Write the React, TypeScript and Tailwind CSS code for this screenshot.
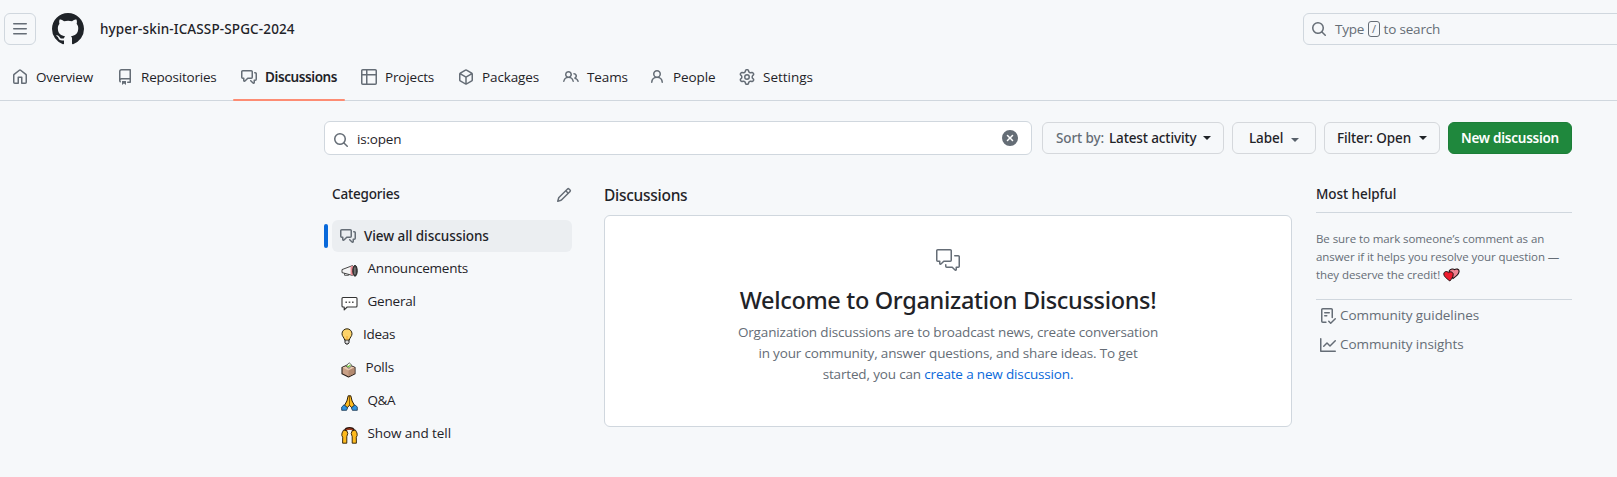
import type { ReactNode } from "react";

const paths = {
  bars: "M1 2.75A.75.75 0 0 1 1.75 2h12.5a.75.75 0 0 1 0 1.5H1.75A.75.75 0 0 1 1 2.75Zm0 5A.75.75 0 0 1 1.75 7h12.5a.75.75 0 0 1 0 1.5H1.75A.75.75 0 0 1 1 7.75ZM1.75 12h12.5a.75.75 0 0 1 0 1.5H1.75a.75.75 0 0 1 0-1.5Z",
  mark: "M8 0c4.42 0 8 3.58 8 8a8.013 8.013 0 0 1-5.45 7.59c-.4.08-.55-.17-.55-.38 0-.27.01-1.13.01-2.2 0-.75-.25-1.23-.54-1.48 1.78-.2 3.65-.88 3.65-3.95 0-.88-.31-1.59-.82-2.15.08-.2.36-1.02-.08-2.12 0 0-.67-.22-2.2.82-.64-.18-1.32-.27-2-.27-.68 0-1.36.09-2 .27-1.53-1.03-2.2-.82-2.2-.82-.44 1.1-.16 1.92-.08 2.12-.51.56-.82 1.28-.82 2.15 0 3.06 1.86 3.75 3.64 3.95-.23.2-.44.55-.51 1.07-.46.21-1.61.55-2.33-.66-.15-.24-.6-.83-1.23-.82-.67.01-.27.38.01.53.34.19.73.9.82 1.13.16.45.68 1.31 2.69.94 0 .67.01 1.3.01 1.49 0 .21-.15.45-.55.38A7.995 7.995 0 0 1 0 8c0-4.42 3.58-8 8-8Z",
  search: "M10.68 11.74a6 6 0 0 1-7.922-8.982 6 6 0 0 1 8.982 7.922l3.04 3.04a.749.749 0 0 1-.326 1.275.749.749 0 0 1-.734-.215ZM11.5 7a4.499 4.499 0 1 0-8.997 0A4.499 4.499 0 0 0 11.5 7Z",
  home: "M6.906.664a1.749 1.749 0 0 1 2.187 0l5.25 4.2c.415.332.657.835.657 1.367v7.019A1.75 1.75 0 0 1 13.25 15h-3.5a.75.75 0 0 1-.75-.75V9H7v5.25a.75.75 0 0 1-.75.75h-3.5A1.75 1.75 0 0 1 1 13.25V6.23c0-.531.242-1.034.657-1.366l5.25-4.2Zm1.25 1.171a.25.25 0 0 0-.312 0l-5.25 4.2a.25.25 0 0 0-.094.196v7.019c0 .138.112.25.25.25H5.5V8.25a.75.75 0 0 1 .75-.75h3.5a.75.75 0 0 1 .75.75v5.25h2.75a.25.25 0 0 0 .25-.25V6.23a.25.25 0 0 0-.094-.195Z",
  repo: "M2 2.5A2.5 2.5 0 0 1 4.5 0h8.75a.75.75 0 0 1 .75.75v12.5a.75.75 0 0 1-.75.75h-2.5a.75.75 0 0 1 0-1.5h1.75v-2h-8a1 1 0 0 0-.714 1.7.75.75 0 1 1-1.072 1.05A2.495 2.495 0 0 1 2 11.5Zm10.5-1h-8a1 1 0 0 0-1 1v6.708A2.486 2.486 0 0 1 4.5 9h8ZM5 12.25a.25.25 0 0 1 .25-.25h3.5a.25.25 0 0 1 .25.25v3.25a.25.25 0 0 1-.4.2l-1.45-1.087a.249.249 0 0 0-.3 0L5.4 15.7a.25.25 0 0 1-.4-.2Z",
  discuss: "M1.75 1h8.5c.966 0 1.75.784 1.75 1.75v5.5A1.75 1.75 0 0 1 10.25 10H7.061l-2.574 2.573A1.458 1.458 0 0 1 2 11.543V10h-.25A1.75 1.75 0 0 1 0 8.25v-5.5C0 1.784.784 1 1.75 1ZM1.5 2.75v5.5c0 .138.112.25.25.25h1a.75.75 0 0 1 .75.75v2.19l2.72-2.72a.749.749 0 0 1 .53-.22h3.5a.25.25 0 0 0 .25-.25v-5.5a.25.25 0 0 0-.25-.25h-8.5a.25.25 0 0 0-.25.25Zm13 2a.25.25 0 0 0-.25-.25h-.5a.75.75 0 0 1 0-1.5h.5c.966 0 1.75.784 1.75 1.75v5.5A1.75 1.75 0 0 1 14.25 12H14v1.543a1.458 1.458 0 0 1-2.487 1.03L9.22 12.28a.749.749 0 0 1 .326-1.275.749.749 0 0 1 .734.215l2.22 2.22v-2.19a.75.75 0 0 1 .75-.75h1a.25.25 0 0 0 .25-.25Z",
  table: "M0 1.75C0 .784.784 0 1.75 0h12.5C15.216 0 16 .784 16 1.75v12.5A1.75 1.75 0 0 1 14.25 16H1.75A1.75 1.75 0 0 1 0 14.25ZM6.5 6.5v8h7.75a.25.25 0 0 0 .25-.25V6.5Zm8-1.5V1.75a.25.25 0 0 0-.25-.25H6.5V5Zm-13 1.5v7.75c0 .138.112.25.25.25H5v-8ZM5 5V1.5H1.75a.25.25 0 0 0-.25.25V5Z",
  pkg: "m8.878.392 5.25 3.045c.54.314.872.89.872 1.514v6.098a1.75 1.75 0 0 1-.872 1.514l-5.25 3.045a1.75 1.75 0 0 1-1.756 0l-5.25-3.045A1.75 1.75 0 0 1 1 11.049V4.951c0-.624.332-1.201.872-1.514L7.122.392a1.75 1.75 0 0 1 1.756 0ZM7.875 1.69l-4.63 2.685L8 7.133l4.755-2.758-4.63-2.685a.248.248 0 0 0-.25 0ZM2.5 5.677v5.372c0 .09.047.171.125.216l4.625 2.683V8.432Zm6.25 8.271 4.625-2.683a.25.25 0 0 0 .125-.216V5.677L8.75 8.432Z",
  people: "M2 5.5a3.5 3.5 0 1 1 5.898 2.549 5.508 5.508 0 0 1 3.034 4.084.75.75 0 1 1-1.482.235 4 4 0 0 0-7.9 0 .75.75 0 0 1-1.482-.236A5.507 5.507 0 0 1 3.102 8.05 3.493 3.493 0 0 1 2 5.5ZM11 4a3.001 3.001 0 0 1 2.22 5.018 5.01 5.01 0 0 1 2.56 3.012.749.749 0 0 1-.885.954.752.752 0 0 1-.549-.514 3.507 3.507 0 0 0-2.522-2.372.75.75 0 0 1-.574-.73v-.352a.75.75 0 0 1 .416-.672A1.5 1.5 0 0 0 11 5.5.75.75 0 0 1 11 4Zm-5.5-.5a2 2 0 1 0-.001 3.999A2 2 0 0 0 5.5 3.5Z",
  person: "M10.561 8.073a6.005 6.005 0 0 1 3.432 5.142.75.75 0 1 1-1.498.07 4.5 4.5 0 0 0-8.99 0 .75.75 0 0 1-1.498-.07 6.004 6.004 0 0 1 3.431-5.142 3.999 3.999 0 1 1 5.123 0ZM10.5 5a2.5 2.5 0 1 0-5 0 2.5 2.5 0 0 0 5 0Z",
  gear: "M8 0a8.2 8.2 0 0 1 .701.031C9.444.095 9.99.645 10.16 1.29l.288 1.107c.018.066.079.158.212.224.231.114.454.243.668.386.123.082.233.09.299.071l1.103-.303c.644-.176 1.392.021 1.82.63.27.385.506.792.704 1.218.315.675.111 1.422-.364 1.891l-.814.806c-.049.048-.098.147-.088.294.016.257.016.515 0 .772-.01.147.038.246.088.294l.814.806c.475.469.679 1.216.364 1.891a7.977 7.977 0 0 1-.704 1.217c-.428.61-1.176.807-1.82.63l-1.102-.302c-.067-.019-.177-.011-.3.071a5.909 5.909 0 0 1-.668.386c-.133.066-.194.158-.211.224l-.29 1.106c-.168.646-.715 1.196-1.458 1.26a8.006 8.006 0 0 1-1.402 0c-.743-.064-1.289-.614-1.458-1.26l-.289-1.106c-.018-.066-.079-.158-.212-.224a5.738 5.738 0 0 1-.668-.386c-.123-.082-.233-.09-.299-.071l-1.103.303c-.644.176-1.392-.021-1.82-.63a8.12 8.12 0 0 1-.704-1.218c-.315-.675-.111-1.422.363-1.891l.815-.806c.05-.048.098-.147.088-.294a6.214 6.214 0 0 1 0-.772c.01-.147-.038-.246-.088-.294l-.815-.806C.635 6.045.431 5.298.746 4.623a7.92 7.92 0 0 1 .704-1.217c.428-.61 1.176-.807 1.82-.63l1.102.302c.067.019.177.011.3-.071.214-.143.437-.272.668-.386.133-.066.194-.158.211-.224l.29-1.106C6.009.645 6.556.095 7.299.03 7.53.01 7.764 0 8 0Zm-.571 1.525c-.036.003-.108.036-.137.146l-.289 1.105c-.147.561-.549.967-.998 1.189-.173.086-.34.183-.5.29-.417.278-.97.423-1.529.27l-1.103-.303c-.109-.03-.175.016-.195.045-.22.312-.412.644-.573.99-.014.031-.021.11.059.19l.815.806c.411.406.562.957.53 1.456a4.709 4.709 0 0 0 0 .582c.032.499-.119 1.05-.53 1.456l-.815.806c-.081.08-.073.159-.059.19.162.346.353.677.573.989.02.03.085.076.195.046l1.102-.303c.56-.153 1.113-.008 1.53.27.161.107.328.204.501.29.447.222.85.629.997 1.189l.289 1.105c.029.109.101.143.137.146a6.6 6.6 0 0 0 1.142 0c.036-.003.108-.036.137-.146l.289-1.105c.147-.561.549-.967.998-1.189.173-.086.34-.183.5-.29.417-.278.97-.423 1.529-.27l1.103.303c.109.029.175-.016.195-.045.22-.313.411-.644.573-.99.014-.031.021-.11-.059-.19l-.815-.806c-.411-.406-.562-.957-.53-1.456a4.709 4.709 0 0 0 0-.582c-.032-.499.119-1.05.53-1.456l.815-.806c.081-.08.073-.159.059-.19a6.464 6.464 0 0 0-.573-.989c-.02-.03-.085-.076-.195-.046l-1.102.303c-.56.153-1.113.008-1.53-.27a4.44 4.44 0 0 0-.501-.29c-.447-.222-.85-.629-.997-1.189l-.289-1.105c-.029-.11-.101-.143-.137-.146a6.6 6.6 0 0 0-1.142 0ZM11 8a3 3 0 1 1-6 0 3 3 0 0 1 6 0ZM9.5 8a1.5 1.5 0 1 0-3.001.001A1.5 1.5 0 0 0 9.5 8Z",
  pencil: "M11.013 1.427a1.75 1.75 0 0 1 2.474 0l1.086 1.086a1.75 1.75 0 0 1 0 2.474l-8.61 8.61c-.21.21-.47.364-.756.445l-3.251.93a.75.75 0 0 1-.927-.928l.929-3.25c.081-.286.235-.547.445-.758l8.61-8.61Zm.176 4.823L9.75 4.81l-6.286 6.287a.253.253 0 0 0-.064.108l-.558 1.953 1.953-.558a.253.253 0 0 0 .108-.064Zm1.238-3.763a.25.25 0 0 0-.354 0L10.811 3.75l1.439 1.44 1.263-1.263a.25.25 0 0 0 0-.354Z",
  clear: "M2.343 13.657A8 8 0 1 1 13.658 2.343 8 8 0 0 1 2.343 13.657ZM6.03 4.97a.751.751 0 0 0-1.042.018.751.751 0 0 0-.018 1.042L6.94 8 4.97 9.97a.749.749 0 0 0 .326 1.275.749.749 0 0 0 .734-.215L8 9.06l1.97 1.97a.749.749 0 0 0 1.275-.326.749.749 0 0 0-.215-.734L9.06 8l1.97-1.97a.749.749 0 0 0-.326-1.275.749.749 0 0 0-.734.215L8 6.94Z",
  graph: "M1.5 1.75V13.5h13.75a.75.75 0 0 1 0 1.5H.75a.75.75 0 0 1-.75-.75V1.75a.75.75 0 0 1 1.5 0Zm14.28 2.53-5.25 5.25a.75.75 0 0 1-1.06 0L7 7.06 4.28 9.78a.751.751 0 0 1-1.042-.018.751.751 0 0 1-.018-1.042l3.25-3.25a.75.75 0 0 1 1.06 0L10 7.94l4.72-4.72a.751.751 0 0 1 1.042.018.751.751 0 0 1 .018 1.042Z",
  checklist: "M2.5 1.75v11.5c0 .138.112.25.25.25h3.17a.75.75 0 0 1 0 1.5H2.75A1.75 1.75 0 0 1 1 13.25V1.75C1 .784 1.784 0 2.75 0h8.5C12.216 0 13 .784 13 1.75v7.736a.75.75 0 0 1-1.5 0V1.75a.25.25 0 0 0-.25-.25h-8.5a.25.25 0 0 0-.25.25Zm13.274 9.537v-.001l-4.557 4.45a.75.75 0 0 1-1.055-.008l-1.943-1.95a.75.75 0 0 1 1.062-1.058l1.419 1.425 4.026-3.932a.75.75 0 1 1 1.048 1.074ZM4.75 4h4.5a.75.75 0 0 1 0 1.5h-4.5a.75.75 0 0 1 0-1.5ZM4 7.75A.75.75 0 0 1 4.75 7h2a.75.75 0 0 1 0 1.5h-2A.75.75 0 0 1 4 7.75Z",
};

function Icon({ name, className = "size-4 text-[#656d76]" }: { name: keyof typeof paths; className?: string }) {
  return (
    <svg viewBox="0 0 16 16" fill="currentColor" className={`shrink-0 ${className}`}>
      <path d={paths[name]} />
    </svg>
  );
}

const MED = "font-['Noto_Sans',sans-serif] font-medium";

const tabs: { icon: keyof typeof paths; label: string; text: string; active?: boolean }[] = [
  { icon: "home", label: "Overview", text: "w-[57px] tracking-[-0.2px]" },
  { icon: "repo", label: "Repositories", text: "w-[76px] tracking-[-0.2px]" },
  { icon: "discuss", label: "Discussions", text: "w-[72px] tracking-[-0.4px] font-['Noto_Sans',sans-serif] font-semibold", active: true },
  { icon: "table", label: "Projects", text: "w-[49px] tracking-[-0.17px]" },
  { icon: "pkg", label: "Packages", text: "w-[57px] tracking-[-0.12px]" },
  { icon: "people", label: "Teams", text: "w-[38px] tracking-[-0.1px]" },
  { icon: "person", label: "People", text: "w-[42px] tracking-[-0.1px]" },
  { icon: "gear", label: "Settings", text: "w-[50px]" },
];

function Caret({ className }: { className: string }) {
  return (
    <svg viewBox="0 0 8 4" fill="currentColor" className={`h-1 w-2 shrink-0 ${className}`}>
      <path d="M0 0h8L4 4z" />
    </svg>
  );
}

function Button({ className, children }: { className: string; children: ReactNode }) {
  return (
    <button className={`flex h-8 items-center rounded-md border border-[#d5d8dc] bg-[#f6f8fa] whitespace-nowrap ${MED} ${className}`}>
      {children}
    </button>
  );
}

const Megaphone = () => (
  <svg viewBox="0 0 17 14" className="h-3.5 w-[17px]">
    <path d="M3.600 9v2.300h4V10" fill="#fff" stroke="#444" strokeWidth=".9" />
    <path d="M1 5.600 11.500 1.600v9.800L1 8.600z" fill="#f4f4f4" stroke="#333" strokeWidth=".9" strokeLinejoin="round" />
    <path d="M9.600 2.600 12 1.800v9.600l-2.400-.8z" fill="#e98a92" />
    <ellipse cx="14" cy="6.800" rx="2.200" ry="5.400" fill="#4a4a4a" stroke="#1a1a1a" />
    <path d="M13.900 3.600v6.400" stroke="#8e8e8e" />
  </svg>
);
const Speech = () => (
  <svg viewBox="0 0 17 15" className="h-[15px] w-[17px]">
    <path d="M2 1.500h13q1 0 1 1v7.500q0 1-1 1H6.200L3.200 13.900V11H2q-1 0-1-1V2.500q0-1 1-1z" fill="#fff" stroke="#333" strokeWidth="1.100" strokeLinejoin="round" />
    <path d="M4.400 6.200h1.600M7.700 6.200h1.600M11 6.200h1.600" stroke="#555" strokeWidth="1.500" />
  </svg>
);
const Bulb = () => (
  <svg viewBox="0 0 12 17" className="h-[17px] w-3">
    <path d="M4 11h4v3.6L7 16H5l-1-1.4z" fill="#d8d8d8" stroke="#1a1a1a" />
    <path d="M6 .8a5 5 0 0 1 5 5C11 8.300 9 9.200 8.300 12H3.700C3 9.200 1 8.300 1 5.800a5 5 0 0 1 5-5z" fill="#fcd36a" stroke="#2b2412" strokeWidth="1" />
    <path d="M6 8v4" stroke="#f4a52a" />
  </svg>
);
const Ballot = () => (
  <svg viewBox="0 0 15 16" className="h-4 w-[15px]">
    <path d="M1 5.400 7.500 2.600 14 5.400v6.400L7.500 15 1 11.800z" fill="#c9a086" stroke="#2a211b" strokeWidth="1.1" strokeLinejoin="round" />
    <path d="M1.500 5.600 7.500 3.200l6 2.400-6 2.800z" fill="#e8c8ad" />
    <path d="M7.500 8.400v6l6-2.900V5.600z" fill="#b38a70" />
    <path d="m4.800 4 3.400-3.200L11 3.400 8 6.300z" fill="#f5fbef" stroke="#333" strokeWidth=".7" />
    <path d="m6.200 3.800 1.300 1 2-2" stroke="#6cc030" strokeWidth="1.200" fill="none" />
  </svg>
);
const Hands = () => (
  <svg viewBox="0 0 17 16" className="h-4 w-[17px]">
    <path d="M7.200.8h2.600l1.300 5.200 2.300 4.200-2.600 2.600-2.300-2.600-2.300 2.600L3.600 10.200l2.300-4.200z" fill="#fdbb1f" stroke="#2a1c05" strokeWidth="1" strokeLinejoin="round" />
    <path d="M8.500 1v9.500" stroke="#7a5208" strokeWidth=".9" />
    <path d="m3 9.800 3.600 3-1 2.500H.7v-3.200zM14 9.800l-3.600 3 1 2.500h4.900v-3.200z" fill="#2f93e0" stroke="#12304a" strokeWidth=".8" strokeLinejoin="round" />
  </svg>
);
const Raised = () => (
  <svg viewBox="0 0 17 17" className="h-[17px] w-[17px]">
    <path d="M4.200 3.800a4.400 3 0 0 1 8.600 0" fill="none" stroke="#2a120a" strokeWidth="2.800" />
    <path d="M5 3.200a4 2.600 0 0 1 7 0" fill="none" stroke="#b8401f" strokeWidth="1.200" />
    <path d="M1 6 2.600 3l3.200.8 1 2.600-1 3.200v6.600H1.600l.1-6L.8 8.500z" fill="#fdbb1f" stroke="#2a1c05" strokeWidth=".9" strokeLinejoin="round" />
    <path d="m16 6-1.600-3-3.200.8-1 2.600 1 3.200v6.600h4.200l-.1-6 .9-1.700z" fill="#fdbb1f" stroke="#2a1c05" strokeWidth=".9" strokeLinejoin="round" />
  </svg>
);
const Hearts = () => (
  <svg viewBox="0 0 17 14" className="inline-block h-3.5 w-[17px] align-[-3px]">
    <path d="M10 10.500 6 3.200C7.500.6 10.500.6 11.600 1.700c1.700-1.400 4.600-.7 4.500 1.600 0 2.500-3.200 5.300-6.100 7.200z" fill="#ef8291" stroke="#1c1012" strokeWidth="1.100" />
    <path d="M6.800 13C3.500 10.400.8 8.500.8 5.900c0-2.500 3.400-3.300 4.700-1.200 1.700-1.800 5-.6 4.700 2C10 9.300 8.600 11 6.800 13z" fill="#ee1c2e" stroke="#1c1012" strokeWidth="1" />
  </svg>
);

const categories: { icon: ReactNode; label: string; text: string }[] = [
  { icon: <Megaphone />, label: "Announcements", text: "pl-[9.5px] tracking-[-0.22px]" },
  { icon: <Speech />, label: "General", text: "pl-[9.5px] tracking-[-0.2px]" },
  { icon: <Bulb />, label: "Ideas", text: "pl-2.5 tracking-[-0.25px]" },
  { icon: <Ballot />, label: "Polls", text: "pl-[9.5px] tracking-[-0.2px]" },
  { icon: <Hands />, label: "Q&A", text: "pl-[9.5px] tracking-[-0.4px]" },
  { icon: <Raised />, label: "Show and tell", text: "pl-[9.5px] tracking-[-0.08px]" },
];

export default function App() {
  return (
    <div className="h-[477px] w-full overflow-hidden bg-[#f6f8fa] font-['Open_Sans',sans-serif] text-[13.5px] leading-5 text-[#1f2328]">
      <header className="h-[101px] border-b border-[#d0d7de] pt-[13px]">
        <div className="flex h-8 items-center pl-1">
          <button className="flex size-8 items-center justify-center rounded-md border border-[#d0d7de]">
            <Icon name="bars" />
          </button>
          <Icon name="mark" className="ml-4 size-8 text-[#1f2328]" />
          <span className={`ml-4 w-[195px] tracking-[0.13px] whitespace-nowrap ${MED}`}>hyper-skin-ICASSP-SPGC-2024</span>
          <div className="-mr-4 ml-auto flex h-8 w-[330px] items-center rounded-md border border-[#d0d7de] pl-[7px] text-[#656d76]">
            <Icon name="search" />
            <span className="ml-2 w-[29px] tracking-[-0.2px]">Type</span>
            <span className="ml-1 flex h-4 w-3 items-center justify-center rounded-[3px] border border-[#656d76] text-[11px]">/</span>
            <span className="ml-[3.5px] tracking-[-0.18px]">to search</span>
          </div>
        </div>
        <nav className="flex h-14 gap-2 pl-1">
          {tabs.map((t) => (
            <a key={t.label} className="relative flex h-full items-center gap-2 px-2 pt-2">
              <Icon name={t.icon} />
              <span className={`whitespace-nowrap ${t.text}`}>{t.label}</span>
              {t.active && <span className="absolute inset-x-0 bottom-0 h-0.5 rounded-full bg-[#fd8c73]" />}
            </a>
          ))}
        </nav>
      </header>

      <div className="flex items-center pt-5 pl-[324px]">
        <div className="flex h-[34px] w-[708px] items-center rounded-md border border-[#d0d7de] bg-white pr-[13px] pl-2">
          <Icon name="search" className="mt-1 size-4 text-[#656d76]" />
          <span className="ml-2 flex-1 pt-0.5 tracking-[-0.2px]">is:open</span>
          <Icon name="clear" />
        </div>
        <Button className="ml-2.5 w-[182px] pl-3">
          <span className="w-[50px] tracking-[-0.1px] text-[#656d76]">Sort by:</span>
          <span className="ml-1 w-[87px] tracking-[-0.12px]">Latest activity</span>
          <Caret className="ml-[7px]" />
        </Button>
        <Button className="ml-2 w-[84px] pl-4">
          <span className="w-[34px] tracking-[-0.1px]">Label</span>
          <Caret className="mt-1 ml-2 text-[#57606a]" />
        </Button>
        <Button className="ml-2 w-[116px] pl-3">
          <span className="w-[74px] tracking-[-0.12px]">Filter: Open</span>
          <Caret className="ml-2" />
        </Button>
        <button className="ml-2 flex h-8 w-[124px] items-center justify-center rounded-md border border-[#1c7e38] bg-[#1f883d] font-['Noto_Sans',sans-serif] font-semibold tracking-[-0.25px] whitespace-nowrap text-white">
          New discussion
        </button>
      </div>

      <div className="flex pl-[324px]">
        <aside className="w-[248px] pt-[29px]">
          <div className="flex h-5 items-center justify-between pl-2">
            <h2 className={`tracking-[-0.18px] ${MED}`}>Categories</h2>
            <Icon name="pencil" className="mt-0.5 size-4 text-[#656d76]" />
          </div>
          <div className="mt-4 flex h-8 items-center">
            <span className="h-6 w-1 rounded-md bg-[#0969da]" />
            <a className="ml-1 flex h-8 flex-1 items-center gap-2 rounded-md bg-[#ebeef1] pl-2">
              <Icon name="discuss" />
              <span className={`tracking-[-0.06px] ${MED}`}>View all discussions</span>
            </a>
          </div>
          <ul>
            {categories.map((c) => (
              <li key={c.label} className="flex h-[33px] items-center pl-[17px]">
                <span className="mt-1">{c.icon}</span>
                <span className={`pb-0.5 ${c.text}`}>{c.label}</span>
              </li>
            ))}
          </ul>
        </aside>

        <main className="ml-8 w-[688px] pt-[30px]">
          <h2 className={`h-[30px] text-[15.5px] leading-5 tracking-[-0.27px] ${MED}`}>Discussions</h2>
          <section className="flex h-[212px] flex-col items-center rounded-md border border-[#d0d7de] bg-white pt-8">
            <svg viewBox="0 0 24 24" fill="currentColor" className="size-6 text-[#656d76]">
              <path d="M1.750 1h12.500c.966 0 1.750.784 1.750 1.750v9.500A1.750 1.750 0 0 1 14.250 14H8.061l-2.574 2.573A1.458 1.458 0 0 1 3 15.543V14H1.750A1.750 1.750 0 0 1 0 12.250v-9.500C0 1.784.784 1 1.750 1ZM1.500 2.750v9.500c0 .138.112.25.25.25h2a.75.75 0 0 1 .75.75v2.190l2.720-2.720a.749.749 0 0 1 .53-.22h6.500a.25.25 0 0 0 .25-.25v-9.500a.25.25 0 0 0-.25-.25H1.750a.25.25 0 0 0-.25.25Z" />
              <path d="M22.500 8.750a.25.25 0 0 0-.25-.25h-3.500a.75.75 0 0 1 0-1.500h3.500c.966 0 1.750.784 1.750 1.750v9.500A1.750 1.750 0 0 1 22.250 20H21v1.543a1.457 1.457 0 0 1-2.487 1.030L15.939 20H10.750A1.750 1.750 0 0 1 9 18.250v-1.465a.75.75 0 0 1 1.500 0v1.465c0 .138.112.25.25.25h5.500a.75.75 0 0 1 .53.22l2.720 2.720v-2.190a.75.75 0 0 1 .75-.75h2a.25.25 0 0 0 .25-.25v-9.500Z" />
            </svg>
            <h3 className={`mt-2.5 text-[23.500px] leading-9 tracking-[-0.33px] whitespace-nowrap ${MED}`}>Welcome to Organization Discussions!</h3>
            <p className="mt-1 text-center leading-[21px] tracking-[-0.16px] whitespace-nowrap text-[#656d76]">
              Organization discussions are to broadcast news, create conversation
              <br />
              in your community, answer questions, and share ideas. To get
              <br />
              started, you can <a className="text-[#0969da]">create a new discussion.</a>
            </p>
          </section>
        </main>

        <aside className="ml-6 w-64 pt-[29px]">
          <h2 className={`h-[29px] border-b border-[#d0d7de] tracking-[-0.06px] ${MED}`}>Most helpful</h2>
          <p className="mt-[17px] h-[70px] border-b border-[#d0d7de] text-[11.5px] leading-[18px] tracking-[-0.08px] whitespace-nowrap text-[#656d76]">
            Be sure to mark someone’s comment as an
            <br />
            answer if it helps you resolve your question —
            <br />
            they deserve the credit! <Hearts />
          </p>
          <div className="flex flex-col gap-[9px] pt-1.5 pl-1 tracking-[-0.08px] text-[#656d76]">
            <a className="flex h-5 items-center gap-1"><Icon name="checklist" /><span className="pb-0.5">Community guidelines</span></a>
            <a className="flex h-5 items-center gap-1"><Icon name="graph" /><span className="pb-0.5">Community insights</span></a>
          </div>
        </aside>
      </div>
    </div>
  );
}
